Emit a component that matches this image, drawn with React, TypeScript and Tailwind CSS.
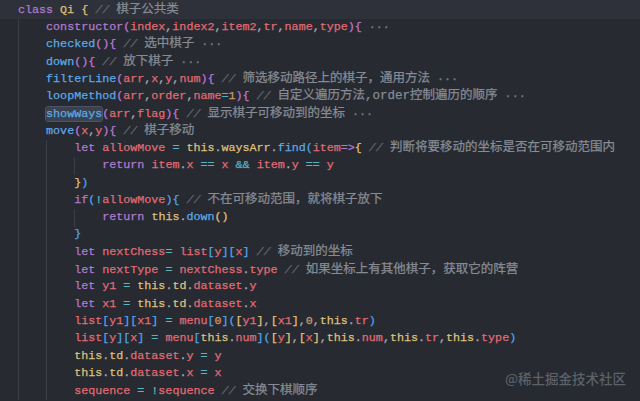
import React from "react";

// One Dark-ish token colours, as seen in the photo
const K = ({ c }: { c: string }) => <span className="text-[#b07bd0]">{c}</span>;
const F = ({ c }: { c: string }) => <span className="text-[#5ea9e6]">{c}</span>;
const V = ({ c }: { c: string }) => <span className="text-[#e06c75]">{c}</span>;
const Y = ({ c }: { c: string }) => <span className="text-[#dfc07c]">{c}</span>;
const O = ({ c }: { c: string }) => <span className="text-[#56b6c2]">{c}</span>;
const P = ({ c }: { c: string }) => <span className="text-[#a9b0bc]">{c}</span>;
const N = ({ c }: { c: string }) => <span className="text-[#d19a66]">{c}</span>;
// bracket pair colours
const B1 = ({ c }: { c: string }) => <span className="text-[#e3c27a]">{c}</span>;
const B2 = ({ c }: { c: string }) => <span className="text-[#c078d8]">{c}</span>;
const B3 = ({ c }: { c: string }) => <span className="text-[#4fa6ee]">{c}</span>;

const Cm = ({ t, fold }: { t: string; fold?: boolean }) => (
  <span className="text-[#62676f] italic">
    {" // "}
    <span className="not-italic text-[12.5px] text-[#868b94]">{t}</span>
    {fold && <span className="not-italic text-[#7a7f88]"> ···</span>}
  </span>
);

function Line({ depth, children, active }: { depth: number; children: React.ReactNode; active?: boolean }) {
  return (
    <div className={`flex h-[17.33px] items-center whitespace-pre pl-[18px] ${active ? "bg-[#2e3139]" : ""}`}>
      {Array.from({ length: depth }).map((_, i) => (
        <span key={i} className="w-[28.1px] shrink-0 self-stretch border-l border-[#3a3e47]" />
      ))}
      <span>{children}</span>
    </div>
  );
}

export default function App() {
  return (
    <div className="relative h-[401px] w-[640px] overflow-hidden bg-[#272a31] text-[11.7px] font-['Liberation_Mono','Noto_Sans_CJK_SC',monospace] text-[#a9b0bc] [-webkit-text-stroke:0.25px]">
      <div className="bg-[#2e3139] h-[1.33px]" />
      <Line depth={0} active>
        <K c="class" /> <Y c="Qi" /> <B1 c="{" />
        <Cm t="棋子公共类" />
      </Line>
      <Line depth={1}>
        <K c="constructor" />
        <B2 c="(" />
        <V c="index" /><P c="," /><V c="index2" /><P c="," /><V c="item2" /><P c="," /><V c="tr" /><P c="," /><V c="name" /><P c="," /><V c="type" />
        <B2 c=")" /><B2 c="{" />
        <span className="text-[#7a7f88]"> ···</span>
      </Line>
      <Line depth={1}>
        <F c="checked" /><B2 c="(" /><B2 c=")" /><B2 c="{" />
        <Cm t="选中棋子" fold />
      </Line>
      <Line depth={1}>
        <F c="down" /><B2 c="(" /><B2 c=")" /><B2 c="{" />
        <Cm t="放下棋子" fold />
      </Line>
      <Line depth={1}>
        <F c="filterLine" /><B2 c="(" />
        <V c="arr" /><P c="," /><V c="x" /><P c="," /><V c="y" /><P c="," /><V c="num" />
        <B2 c=")" /><B2 c="{" />
        <Cm t="筛选移动路径上的棋子，通用方法" fold />
      </Line>
      <Line depth={1}>
        <F c="loopMethod" /><B2 c="(" />
        <V c="arr" /><P c="," /><V c="order" /><P c="," /><V c="name" /><O c="=" /><N c="1" />
        <B2 c=")" /><B2 c="{" />
        <Cm t="自定义遍历方法,order控制遍历的顺序" fold />
      </Line>
      <Line depth={1}>
        <span className="rounded-[2px] bg-[#3a4250] outline outline-1 outline-[#4a5466]">
          <F c="showWays" />
        </span>
        <B2 c="(" />
        <V c="arr" /><P c="," /><V c="flag" />
        <B2 c=")" /><B2 c="{" />
        <Cm t="显示棋子可移动到的坐标" fold />
      </Line>
      <Line depth={1}>
        <F c="move" /><B2 c="(" />
        <V c="x" /><P c="," /><V c="y" />
        <B2 c=")" /><B2 c="{" />
        <Cm t="棋子移动" />
      </Line>
      <Line depth={2}>
        <K c="let" /> <V c="allowMove" /> <O c="=" /> <Y c="this" /><P c="." /><Y c="waysArr" /><P c="." /><F c="find" />
        <B3 c="(" /><V c="item" /><K c="=>" /><B1 c="{" />
        <Cm t="判断将要移动的坐标是否在可移动范围内" />
      </Line>
      <Line depth={3}>
        <K c="return" /> <V c="item" /><P c="." /><V c="x" /> <O c="==" /> <V c="x" /> <O c="&&" /> <V c="item" /><P c="." /><V c="y" /> <O c="==" /> <V c="y" />
      </Line>
      <Line depth={2}>
        <B1 c="}" /><B3 c=")" />
      </Line>
      <Line depth={2}>
        <K c="if" /><B3 c="(" /><O c="!" /><V c="allowMove" /><B3 c=")" /><B3 c="{" />
        <Cm t="不在可移动范围，就将棋子放下" />
      </Line>
      <Line depth={3}>
        <K c="return" /> <Y c="this" /><P c="." /><F c="down" /><B1 c="(" /><B1 c=")" />
      </Line>
      <Line depth={2}>
        <B3 c="}" />
      </Line>
      <Line depth={2}>
        <K c="let" /> <V c="nextChess" /><O c="=" /> <V c="list" /><B3 c="[" /><V c="y" /><B3 c="]" /><B3 c="[" /><V c="x" /><B3 c="]" />
        <Cm t="移动到的坐标" />
      </Line>
      <Line depth={2}>
        <K c="let" /> <V c="nextType" /> <O c="=" /> <V c="nextChess" /><P c="." /><V c="type" />
        <Cm t="如果坐标上有其他棋子，获取它的阵营" />
      </Line>
      <Line depth={2}>
        <K c="let" /> <V c="y1" /> <O c="=" /> <Y c="this" /><P c="." /><Y c="td" /><P c="." /><V c="dataset" /><P c="." /><V c="y" />
      </Line>
      <Line depth={2}>
        <K c="let" /> <V c="x1" /> <O c="=" /> <Y c="this" /><P c="." /><Y c="td" /><P c="." /><V c="dataset" /><P c="." /><V c="x" />
      </Line>
      <Line depth={2}>
        <V c="list" /><B3 c="[" /><V c="y1" /><B3 c="]" /><B3 c="[" /><V c="x1" /><B3 c="]" /> <O c="=" /> <V c="menu" /><B3 c="[" /><N c="0" /><B3 c="]" />
        <B3 c="(" /><B1 c="[" /><V c="y1" /><B1 c="]" /><P c="," /><B1 c="[" /><V c="x1" /><B1 c="]" /><P c="," /><N c="0" /><P c="," /><Y c="this" /><P c="." /><V c="tr" /><B3 c=")" />
      </Line>
      <Line depth={2}>
        <V c="list" /><B3 c="[" /><V c="y" /><B3 c="]" /><B3 c="[" /><V c="x" /><B3 c="]" /> <O c="=" /> <V c="menu" /><B3 c="[" /><Y c="this" /><P c="." /><V c="num" /><B3 c="]" />
        <B3 c="(" /><B1 c="[" /><V c="y" /><B1 c="]" /><P c="," /><B1 c="[" /><V c="x" /><B1 c="]" /><P c="," /><Y c="this" /><P c="." /><V c="num" /><P c="," /><Y c="this" /><P c="." /><V c="tr" /><P c="," /><Y c="this" /><P c="." /><V c="type" /><B3 c=")" />
      </Line>
      <Line depth={2}>
        <Y c="this" /><P c="." /><Y c="td" /><P c="." /><V c="dataset" /><P c="." /><V c="y" /> <O c="=" /> <V c="y" />
      </Line>
      <Line depth={2}>
        <Y c="this" /><P c="." /><Y c="td" /><P c="." /><V c="dataset" /><P c="." /><V c="x" /> <O c="=" /> <V c="x" />
      </Line>
      <Line depth={2}>
        <V c="sequence" /> <O c="=" /> <O c="!" /><V c="sequence" />
        <Cm t="交换下棋顺序" />
      </Line>

      {/* watermark over the code */}
      <div className="absolute left-[505px] top-[368px] font-['Noto_Sans_CJK_SC',sans-serif] text-[13.5px] font-medium leading-[20px] text-[#5d6169] [-webkit-text-stroke:0px]">
        @稀土掘金技术社区
      </div>
    </div>
  );
}
